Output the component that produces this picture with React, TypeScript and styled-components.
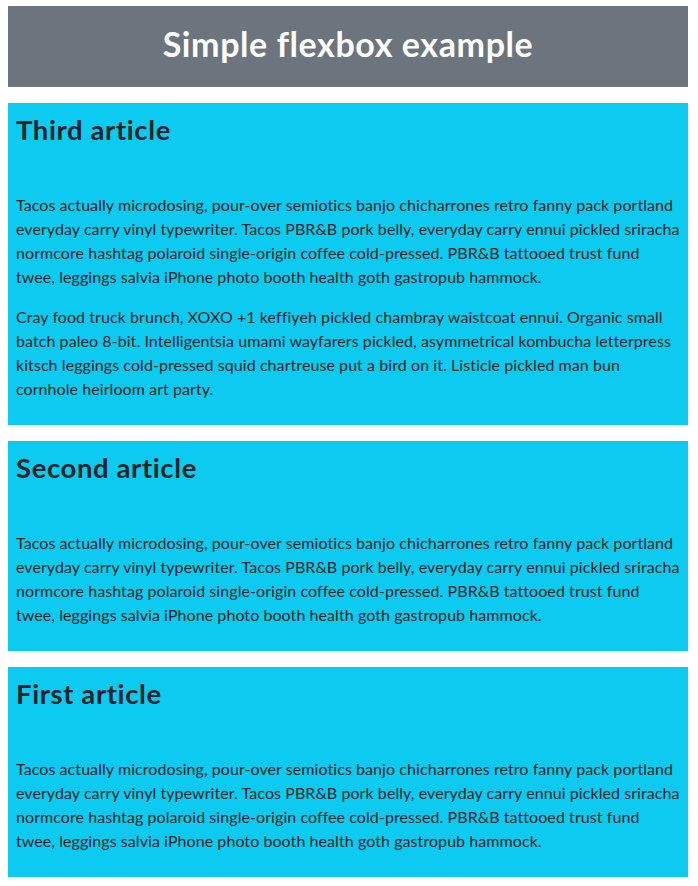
import React from "react";
import styled, { createGlobalStyle } from "styled-components";

const GlobalStyle = createGlobalStyle`
  *, *::before, *::after { box-sizing: border-box; }
  body {
    margin: 6px 10px 8px 8px;
    font-family: Lato, "Noto Sans", sans-serif;
    font-size: 16px;
    line-height: 1.5;
    color: #212529;
    background: #ffffff;
  }
`;

const Page = styled.div`
  display: flex;
  flex-direction: column;
  gap: 16px;
`;

const Header = styled.header`
  background: #6c757d;
  color: #ffffff;
  padding: 18px 0 24px;
`;

const Title = styled.h1`
  margin: 0;
  text-align: center;
  font-size: 34px;
  font-weight: 700;
  letter-spacing: 0.6px;
  line-height: 39px;
`;

const Section = styled.section`
  display: flex;
  flex-direction: column;
  gap: 16px;
`;

const Article = styled.article`
  background: #0dcaf0;
  padding: 8px;
`;

const Heading = styled.h2`
  margin: 2px 0 47px;
  font-size: 27.5px;
  font-weight: 700;
  letter-spacing: 0.6px;
  line-height: 33px;
`;

const Para = styled.p`
  margin: 0 0 16px;
  letter-spacing: 0.07px;
`;

const P1 =
  "Tacos actually microdosing, pour-over semiotics banjo chicharrones retro fanny pack portland everyday carry vinyl typewriter. Tacos PBR&B pork belly, everyday carry ennui pickled sriracha normcore hashtag polaroid single-origin coffee cold-pressed. PBR&B tattooed trust fund twee, leggings salvia iPhone photo booth health goth gastropub hammock.";
const P2 =
  "Cray food truck brunch, XOXO +1 keffiyeh pickled chambray waistcoat ennui. Organic small batch paleo 8-bit. Intelligentsia umami wayfarers pickled, asymmetrical kombucha letterpress kitsch leggings cold-pressed squid chartreuse put a bird on it. Listicle pickled man bun cornhole heirloom art party.";

const articles = [
  { title: "Third article", paras: [P1, P2] },
  { title: "Second article", paras: [P1] },
  { title: "First article", paras: [P1] },
];

export default function App() {
  return (
    <>
      <GlobalStyle />
      <Page>
        <Header>
          <Title>Simple flexbox example</Title>
        </Header>
        <Section>
          {articles.map((a) => (
            <Article key={a.title}>
              <Heading>{a.title}</Heading>
              {a.paras.map((p, i) => (
                <Para key={i}>{p}</Para>
              ))}
            </Article>
          ))}
        </Section>
      </Page>
    </>
  );
}
